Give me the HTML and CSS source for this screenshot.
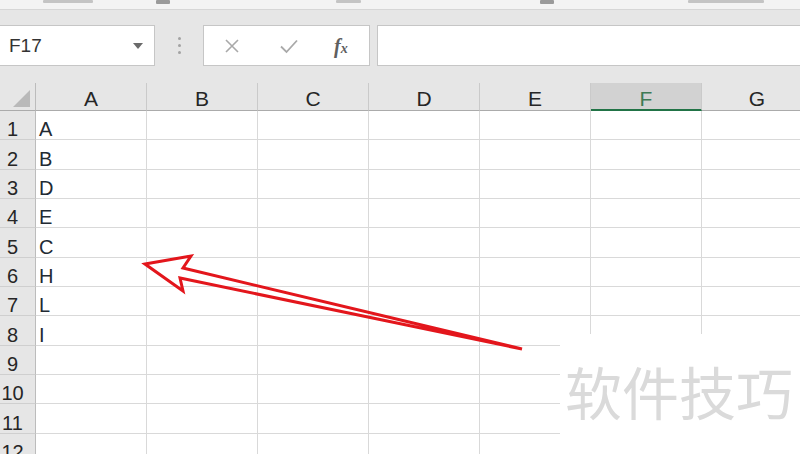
FILE: index.html
```html
<!DOCTYPE html>
<html>
<head>
<meta charset="utf-8">
<link rel="stylesheet" href="styles.css">
</head>
<body>
<div class="app">
  <div class="topstrip">
    <span class="mk mk1"></span>
    <span class="mk mk2"></span>
    <span class="mk mk3"></span>
    <span class="mk mk4"></span>
    <span class="mk mk5"></span>
  </div>
  <div class="toolbar">
    <div class="namebox"><span class="nbtext">F17</span><span class="caret"></span></div>
    <div class="grip"><i></i><i></i><i></i></div>
    <div class="fbtns">
      <svg class="ic-x" width="16" height="16" viewBox="0 0 16 16"><path d="M2 2 L14 14 M14 2 L2 14" stroke="#a9a9a9" stroke-width="1.6" fill="none"/></svg>
      <svg class="ic-ok" width="20" height="16" viewBox="0 0 20 16"><path d="M2 8.5 L7.5 14 L18 2.5" stroke="#a9a9a9" stroke-width="1.8" fill="none"/></svg>
      <span class="fx">f<span class="fxsub">x</span></span>
    </div>
    <div class="finput"></div>
  </div>
  <div class="sheet">
    <div class="corner"><span class="tri"></span></div>
    <div class="ch">A</div><div class="ch">B</div><div class="ch">C</div><div class="ch">D</div><div class="ch">E</div><div class="ch sel">F</div><div class="ch">G</div>

    <div class="rh">1</div><div class="c">A</div><div class="c"></div><div class="c"></div><div class="c"></div><div class="c"></div><div class="c"></div><div class="c"></div>
    <div class="rh">2</div><div class="c">B</div><div class="c"></div><div class="c"></div><div class="c"></div><div class="c"></div><div class="c"></div><div class="c"></div>
    <div class="rh">3</div><div class="c">D</div><div class="c"></div><div class="c"></div><div class="c"></div><div class="c"></div><div class="c"></div><div class="c"></div>
    <div class="rh">4</div><div class="c">E</div><div class="c"></div><div class="c"></div><div class="c"></div><div class="c"></div><div class="c"></div><div class="c"></div>
    <div class="rh">5</div><div class="c">C</div><div class="c"></div><div class="c"></div><div class="c"></div><div class="c"></div><div class="c"></div><div class="c"></div>
    <div class="rh">6</div><div class="c">H</div><div class="c"></div><div class="c"></div><div class="c"></div><div class="c"></div><div class="c"></div><div class="c"></div>
    <div class="rh">7</div><div class="c">L</div><div class="c"></div><div class="c"></div><div class="c"></div><div class="c"></div><div class="c"></div><div class="c"></div>
    <div class="rh">8</div><div class="c">I</div><div class="c"></div><div class="c"></div><div class="c"></div><div class="c"></div><div class="c"></div><div class="c"></div>
    <div class="rh">9</div><div class="c"></div><div class="c"></div><div class="c"></div><div class="c"></div><div class="c"></div><div class="c"></div><div class="c"></div>
    <div class="rh">10</div><div class="c"></div><div class="c"></div><div class="c"></div><div class="c"></div><div class="c"></div><div class="c"></div><div class="c"></div>
    <div class="rh">11</div><div class="c"></div><div class="c"></div><div class="c"></div><div class="c"></div><div class="c"></div><div class="c"></div><div class="c"></div>
    <div class="rh">12</div><div class="c"></div><div class="c"></div><div class="c"></div><div class="c"></div><div class="c"></div><div class="c"></div><div class="c"></div>
  </div>
  <svg class="arrow" width="800" height="454" viewBox="0 0 800 454">
    <polygon points="145,264 191,256 183,268 522,349 180,278 183,291" fill="none" stroke="#e3161c" stroke-width="3" stroke-linejoin="miter" stroke-miterlimit="10"/>
  </svg>
  <div class="watermark">软件技巧</div>
</div>
</body>
</html>
```

FILE: styles.css
```css
* { box-sizing: border-box; }
html, body { margin: 0; padding: 0; background: #fff; }
body { font-family: "Liberation Sans", Arial, "Noto Sans CJK SC", sans-serif; }

.app {
  position: relative;
  width: 800px;
  height: 454px;
  overflow: hidden;
  background: #fff;
}

.topstrip {
  height: 10px;
  background: #f3f3f3;
  border-bottom: 1px solid #d6d6d6;
  display: flex;
  align-items: flex-start;
}
.mk { display: block; height: 3px; background: #c4c4c4; border-radius: 1px; }
.mk1 { margin-left: 43px; width: 50px; }
.mk2 { margin-left: 63px; width: 14px; background: #9a9a9a; height: 4px; }
.mk3 { margin-left: 166px; width: 25px; }
.mk4 { margin-left: 179px; width: 14px; background: #9a9a9a; height: 4px; }
.mk5 { margin-left: 134px; width: 76px; }

.toolbar {
  height: 73px;
  background: #e6e6e6;
  display: flex;
  align-items: flex-start;
  padding-top: 15px;
}
.namebox {
  width: 156px;
  height: 41px;
  margin-left: -1px;
  background: #fff;
  border: 1px solid #c6c6c6;
  display: flex;
  align-items: center;
  justify-content: space-between;
  padding: 0 11px 0 9px;
}
.nbtext { font-size: 19px; color: #333; }
.caret {
  width: 0; height: 0;
  border-left: 5px solid transparent;
  border-right: 5px solid transparent;
  border-top: 6px solid #6a6a6a;
  margin-top: 1px;
}
.grip {
  width: 48px;
  height: 41px;
  display: flex;
  flex-direction: column;
  align-items: center;
  justify-content: center;
  gap: 4px;
}
.grip i { display: block; width: 3px; height: 3px; border-radius: 50%; background: #a3a3a3; }
.fbtns {
  width: 167px;
  height: 41px;
  background: #fff;
  border: 1px solid #c6c6c6;
  margin-right: 7px;
  display: flex;
  align-items: center;
  padding-left: 20px;
}
.ic-x { margin-right: 39px; }
.ic-ok { margin-right: 35px; }
.fx {
  font-family: "Liberation Serif", "Times New Roman", serif;
  font-style: italic;
  font-weight: bold;
  font-size: 20px;
  color: #5f5f5f;
  line-height: 1;
}
.fxsub { font-size: 14px; }
.finput {
  flex: 1;
  height: 41px;
  margin-right: -1px;
  background: #fff;
  border: 1px solid #c6c6c6;
}

.sheet {
  display: grid;
  grid-template-columns: 36px repeat(7, 111px);
  grid-template-rows: 28px repeat(12, 29.33px);
  width: 813px;
}
.corner, .ch, .rh {
  background: #e6e6e6;
}
.corner {
  border-right: 1px solid #bcbcbc;
  border-bottom: 1px solid #ababab;
  position: relative;
}
.tri {
  position: absolute;
  left: 13px;
  top: 7px;
  width: 0; height: 0;
  border-left: 17px solid transparent;
  border-bottom: 17px solid #b9b9b9;
}
.ch {
  border-right: 1px solid #cacaca;
  border-bottom: 1px solid #ababab;
  display: flex;
  align-items: flex-end;
  justify-content: center;
  font-size: 21px;
  line-height: 1;
  color: #262626;
  padding-bottom: 1px;
}
.ch.sel {
  background: #d2d2d2;
  border-bottom: 2px solid #217346;
  color: #3e7a55;
  padding-bottom: 0;
}
.rh {
  border-right: 1px solid #bcbcbc;
  border-bottom: 1px solid #cfcfcf;
  display: flex;
  align-items: flex-end;
  justify-content: center;
  padding-right: 10px;
  font-size: 20px;
  line-height: 1;
  color: #262626;
  white-space: nowrap;
}
.c {
  border-right: 1px solid #d9d9d9;
  border-bottom: 1px solid #d9d9d9;
  display: flex;
  align-items: flex-end;
  padding-left: 3px;
  font-size: 20px;
  line-height: 1;
  color: #222a33;
  background: #fff;
}

.arrow {
  position: absolute;
  left: 0;
  top: 0;
  pointer-events: none;
}
.watermark {
  position: absolute;
  left: 560px;
  top: 334px;
  width: 240px;
  height: 120px;
  background: #fff;
  font-family: "Noto Sans CJK SC", sans-serif;
  font-size: 57px;
  line-height: 1;
  color: #dadada;
  padding: 28px 0 0 5px;
  white-space: nowrap;
}
```
